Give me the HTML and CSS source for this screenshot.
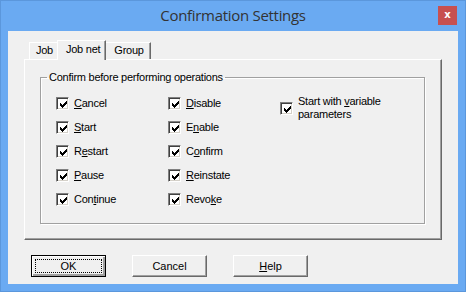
FILE: index.html
```html
<!DOCTYPE html>
<html lang="en">
<head>
    <meta charset="UTF-8">
    <title>Confirmation Settings</title>
    <link rel="stylesheet" href="styles.css">
</head>
<body>
    <div class="window">
        <div class="titlebar">
            <span></span>
            <span class="title">Confirmation Settings</span>
            <span class="close">x</span>
        </div>

        <div class="client">
            <div class="tab-strip">
                <div class="tab">Job</div>
                <div class="tab selected">Job net</div>
                <div class="tab last">Group</div>
            </div>

            <div class="tab-panel">
                <fieldset class="group">
                    <legend>Confirm before performing operations</legend>
                    <div class="checks">
                        <label class="check"><span class="box"><svg viewBox="0 0 7 7"><path d="M0 2h1v1h1v1h1V3h1V2h1V1h1V0h1v3H6v1H5v1H4v1H3v1H2V6H1V5H0z"/></svg></span><span class="text"><u>C</u>ancel</span></label>
                        <label class="check"><span class="box"><svg viewBox="0 0 7 7"><path d="M0 2h1v1h1v1h1V3h1V2h1V1h1V0h1v3H6v1H5v1H4v1H3v1H2V6H1V5H0z"/></svg></span><span class="text"><u>D</u>isable</span></label>
                        <label class="check wide"><span class="box"><svg viewBox="0 0 7 7"><path d="M0 2h1v1h1v1h1V3h1V2h1V1h1V0h1v3H6v1H5v1H4v1H3v1H2V6H1V5H0z"/></svg></span><span class="text">Start with <u>v</u>ariable<br>parameters</span></label>

                        <label class="check"><span class="box"><svg viewBox="0 0 7 7"><path d="M0 2h1v1h1v1h1V3h1V2h1V1h1V0h1v3H6v1H5v1H4v1H3v1H2V6H1V5H0z"/></svg></span><span class="text"><u>S</u>tart</span></label>
                        <label class="check"><span class="box"><svg viewBox="0 0 7 7"><path d="M0 2h1v1h1v1h1V3h1V2h1V1h1V0h1v3H6v1H5v1H4v1H3v1H2V6H1V5H0z"/></svg></span><span class="text">E<u>n</u>able</span></label>
                        <span></span>

                        <label class="check"><span class="box"><svg viewBox="0 0 7 7"><path d="M0 2h1v1h1v1h1V3h1V2h1V1h1V0h1v3H6v1H5v1H4v1H3v1H2V6H1V5H0z"/></svg></span><span class="text">R<u>e</u>start</span></label>
                        <label class="check"><span class="box"><svg viewBox="0 0 7 7"><path d="M0 2h1v1h1v1h1V3h1V2h1V1h1V0h1v3H6v1H5v1H4v1H3v1H2V6H1V5H0z"/></svg></span><span class="text">C<u>o</u>nfirm</span></label>
                        <span></span>

                        <label class="check"><span class="box"><svg viewBox="0 0 7 7"><path d="M0 2h1v1h1v1h1V3h1V2h1V1h1V0h1v3H6v1H5v1H4v1H3v1H2V6H1V5H0z"/></svg></span><span class="text"><u>P</u>ause</span></label>
                        <label class="check"><span class="box"><svg viewBox="0 0 7 7"><path d="M0 2h1v1h1v1h1V3h1V2h1V1h1V0h1v3H6v1H5v1H4v1H3v1H2V6H1V5H0z"/></svg></span><span class="text"><u>R</u>einstate</span></label>
                        <span></span>

                        <label class="check"><span class="box"><svg viewBox="0 0 7 7"><path d="M0 2h1v1h1v1h1V3h1V2h1V1h1V0h1v3H6v1H5v1H4v1H3v1H2V6H1V5H0z"/></svg></span><span class="text">Con<u>t</u>inue</span></label>
                        <label class="check"><span class="box"><svg viewBox="0 0 7 7"><path d="M0 2h1v1h1v1h1V3h1V2h1V1h1V0h1v3H6v1H5v1H4v1H3v1H2V6H1V5H0z"/></svg></span><span class="text">Revo<u>k</u>e</span></label>
                        <span></span>
                    </div>
                </fieldset>
            </div>

            <div class="buttons">
                <button class="btn default"><span class="focus">OK</span></button>
                <button class="btn">Cancel</button>
                <button class="btn"><u>H</u>elp</button>
            </div>
        </div>
    </div>
</body>
</html>
```

FILE: styles.css
```css
* {
    margin: 0;
    padding: 0;
    box-sizing: border-box;
}

body {
    background: #6aaaf2;
    font-family: "Liberation Sans", Arial, sans-serif;
    font-size: 11px;
    letter-spacing: -0.25px;
    color: #000;
}

.window {
    width: 466px;
    height: 292px;
    background: #6aaaf2;
    border: 1px solid #5b97dc;
    display: flex;
    flex-direction: column;
}

.titlebar {
    height: 30px;
    display: grid;
    grid-template-columns: 1fr auto 1fr;
    align-items: start;
}

.title {
    font-family: "Open Sans", "Noto Sans", sans-serif;
    font-size: 15px;
    color: #333;
    padding-top: 4px;
    letter-spacing: -0.3px;
}

.close {
    justify-self: end;
    margin: 5px 8px 0 0;
    width: 19px;
    height: 19px;
    background: #c75050;
    color: #fff;
    font-family: "DejaVu Sans", sans-serif;
    font-weight: bold;
    font-size: 10px;
    letter-spacing: 0;
    line-height: 18px;
    text-align: center;
}

.client {
    margin: 0 7px 7px 7px;
    height: 253px;
    background: #f0f0f0;
    padding: 9px 16px 0 16px;
}

/* tabs */
.tab-strip {
    display: flex;
    align-items: flex-end;
    height: 19px;
    padding-left: 5px;
}

.tab {
    height: 17px;
    line-height: 15px;
    padding: 0 6px;
    border-top: 1px solid #fff;
    border-left: 1px solid #fff;
    background: #f0f0f0;
}

.tab.selected {
    position: relative;
    height: 20px;
    margin: 0 0 -1px -2px;
    padding: 0 5px 0 8px;
    line-height: 16px;
    border-right: 1px solid #696969;
    box-shadow: inset -1px 0 #a0a0a0;
}

.tab.last {
    border-left: none;
    padding: 0 6px 0 8px;
    border-right: 1px solid #696969;
    box-shadow: inset -1px 0 #a0a0a0;
}

.tab-panel {
    width: 418px;
    height: 181px;
    border-top: 1px solid #fff;
    border-left: 1px solid #fff;
    border-right: 1px solid #696969;
    border-bottom: 1px solid #696969;
    box-shadow: inset -1px -1px #a0a0a0;
    padding: 11px 0 0 15px;
}

/* group box */
.group {
    width: 385px;
    height: 153px;
    border: 1px solid #a0a0a0;
    box-shadow: inset 1px 1px #fff, 1px 1px #fff;
    padding: 7px 0 0 15px;
}

.group legend {
    margin-left: -9px;
    padding: 0 2px;
    line-height: 13px;
}

.checks {
    display: grid;
    grid-template-columns: 112px 112px 1fr;
    grid-auto-rows: 24px;
}

.check {
    display: flex;
    align-items: center;
    gap: 5px;
}

.check.wide {
    align-self: start;
    margin-top: 4px;
    height: 26px;
}

.check .text {
    line-height: 13px;
    white-space: nowrap;
}

.box {
    width: 13px;
    height: 13px;
    flex: none;
    background: #fff;
    border-top: 1px solid #808080;
    border-left: 1px solid #808080;
    border-bottom: 1px solid #fff;
    border-right: 1px solid #fff;
    box-shadow: inset 1px 1px #404040, inset -1px -1px #d4d0c8;
    padding: 3px 0 0 3px;
}

.box svg {
    display: block;
    width: 7px;
    height: 7px;
}

u {
    text-decoration: underline;
    text-underline-offset: 1px;
}

/* buttons */
.buttons {
    display: flex;
    gap: 26px;
    margin: 15px 0 0 7px;
}

.btn {
    width: 75px;
    height: 22px;
    font: inherit;
    color: #000;
    background: #f0f0f0;
    border-top: 1px solid #fff;
    border-left: 1px solid #fff;
    border-right: 1px solid #696969;
    border-bottom: 1px solid #696969;
    box-shadow: inset -1px -1px #a0a0a0;
}

.btn.default {
    border: 1px solid #000;
    box-shadow: inset 1px 1px #fff, inset -2px -2px #a0a0a0, inset -1px -1px #696969;
    padding: 3px;
}

.focus {
    display: block;
    height: 14px;
    line-height: 12px;
    border: 1px dotted #000;
}
```
